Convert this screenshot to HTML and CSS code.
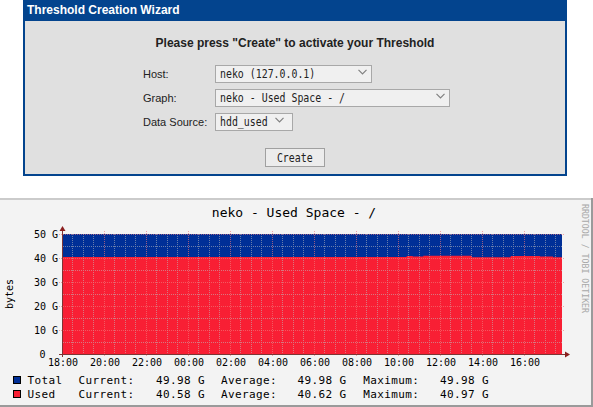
FILE: index.html
```html
<!DOCTYPE html>
<html>
<head>
<meta charset="utf-8">
<title>Threshold Creation Wizard</title>
<link rel="stylesheet" href="styles.css">
</head>
<body>
<div class="wizard">
  <div class="wiz-head">Threshold Creation Wizard</div>
  <div class="wiz-body">
    <h2 class="wiz-title">Please press "Create" to activate your Threshold</h2>
    <div class="form">
      <span class="lbl">Host:</span>
      <div class="sel sel-host"><span class="mono">neko (127.0.0.1)</span><svg class="chev" width="9" height="6" viewBox="0 0 9 6"><path d="M0.5 0.8 L4.5 4.8 L8.5 0.8" fill="none" stroke="#808080" stroke-width="1.2"/></svg></div>
      <span class="lbl">Graph:</span>
      <div class="sel sel-graph"><span class="mono">neko - Used Space - /</span><svg class="chev" width="9" height="6" viewBox="0 0 9 6"><path d="M0.5 0.8 L4.5 4.8 L8.5 0.8" fill="none" stroke="#808080" stroke-width="1.2"/></svg></div>
      <span class="lbl">Data Source:</span>
      <div class="sel sel-ds"><span class="mono">hdd_used</span><svg class="chev" width="9" height="6" viewBox="0 0 9 6"><path d="M0.5 0.8 L4.5 4.8 L8.5 0.8" fill="none" stroke="#808080" stroke-width="1.2"/></svg></div>
    </div>
    <button class="btn" type="button"><span class="mono mono-c">Create</span></button>
  </div>
</div>

<svg class="graph" width="593" height="209" viewBox="0 0 593 209">
  <rect x="0" y="0" width="593" height="209" fill="#f3f3f3"/>
  <rect x="0" y="0" width="593" height="2" fill="#cbcbcb"/>
  <rect x="591" y="0" width="2" height="209" fill="#9a9a9a"/>
  <rect x="0" y="207" width="593" height="2" fill="#9a9a9a"/>

  <text class="gt g-title" x="294" y="19" text-anchor="middle">neko - Used Space - /</text>
  <text class="gt g-mark" transform="translate(581.5,6) rotate(90)" textLength="109" lengthAdjust="spacingAndGlyphs">RRDTOOL / TOBI OETIKER</text>
  <text class="gt g-tick" transform="translate(12.5,96) rotate(-90)" text-anchor="middle">bytes</text>

  <!-- fills -->
  <rect x="63" y="36" width="499" height="120" fill="#002f97"/>
  <polygon fill="#f81f34" points="63,59 406.7,59 406.7,58 412.7,58 412.7,58.6 423.3,58.6 423.3,57.7 471.7,57.7 471.7,59.2 510.7,59.2 510.7,58 540,58 540,58.6 553,58.6 553,59.2 562,59.2 562,156 63,156"/>

  <!-- grid -->
  <path class="grid-minor" d="M72.5 36V156M83.5 36V156M93.5 36V156M114.5 36V156M125.5 36V156M135.5 36V156M156.5 36V156M167.5 36V156M177.5 36V156M198.5 36V156M209.5 36V156M219.5 36V156M240.5 36V156M251.5 36V156M261.5 36V156M282.5 36V156M293.5 36V156M303.5 36V156M324.5 36V156M335.5 36V156M345.5 36V156M366.5 36V156M377.5 36V156M387.5 36V156M408.5 36V156M419.5 36V156M429.5 36V156M450.5 36V156M461.5 36V156M471.5 36V156M492.5 36V156M503.5 36V156M513.5 36V156M534.5 36V156M545.5 36V156M555.5 36V156M63 48.5H562M63 72.5H562M63 96.5H562M63 120.5H562M63 144.5H562"/>
  <path class="grid-major" d="M104.5 33V159M146.5 33V159M188.5 33V159M230.5 33V159M272.5 33V159M314.5 33V159M356.5 33V159M398.5 33V159M440.5 33V159M482.5 33V159M524.5 33V159M59 36.5H565M59 60.5H565M59 84.5H565M59 108.5H565M59 132.5H565"/>

  <!-- axes -->
  <path d="M62.5 159V31M59 156.5H566" stroke="#7e3434" stroke-width="1" fill="none"/>
  <polygon points="59.5,33 62.5,28 65.5,33" fill="#8b1f1f"/>
  <polygon points="565,153.5 570,156.5 565,159.5" fill="#8b1f1f"/>

  <!-- y labels -->
  <text class="gt g-tick" x="58" y="40" text-anchor="end">50 G</text>
  <text class="gt g-tick" x="58" y="64" text-anchor="end">40 G</text>
  <text class="gt g-tick" x="58" y="88" text-anchor="end">30 G</text>
  <text class="gt g-tick" x="58" y="112" text-anchor="end">20 G</text>
  <text class="gt g-tick" x="58" y="136" text-anchor="end">10 G</text>
  <text class="gt g-tick" x="45.5" y="160" text-anchor="end">0</text>

  <!-- x labels -->
  <text class="gt g-tick" x="63" y="168" text-anchor="middle">18:00</text>
  <text class="gt g-tick" x="105" y="168" text-anchor="middle">20:00</text>
  <text class="gt g-tick" x="147" y="168" text-anchor="middle">22:00</text>
  <text class="gt g-tick" x="189" y="168" text-anchor="middle">00:00</text>
  <text class="gt g-tick" x="231" y="168" text-anchor="middle">02:00</text>
  <text class="gt g-tick" x="273" y="168" text-anchor="middle">04:00</text>
  <text class="gt g-tick" x="315" y="168" text-anchor="middle">06:00</text>
  <text class="gt g-tick" x="357" y="168" text-anchor="middle">08:00</text>
  <text class="gt g-tick" x="399" y="168" text-anchor="middle">10:00</text>
  <text class="gt g-tick" x="441" y="168" text-anchor="middle">12:00</text>
  <text class="gt g-tick" x="483" y="168" text-anchor="middle">14:00</text>
  <text class="gt g-tick" x="525" y="168" text-anchor="middle">16:00</text>

  <!-- legend -->
  <rect x="13.5" y="178.5" width="7" height="7" fill="#002f97" stroke="#000" stroke-width="1"/>
  <rect x="13.5" y="192.5" width="7" height="7" fill="#f81f34" stroke="#000" stroke-width="1"/>
  <text class="gt g-leg" x="27.6" y="186">Total</text>
  <text class="gt g-leg" x="78.6" y="186">Current:</text>
  <text class="gt g-leg" x="156" y="186">49.98 G</text>
  <text class="gt g-leg" x="221" y="186">Average:</text>
  <text class="gt g-leg" x="297.6" y="186">49.98 G</text>
  <text class="gt g-leg" x="363.3" y="186">Maximum:</text>
  <text class="gt g-leg" x="440" y="186">49.98 G</text>
  <text class="gt g-leg" x="27.6" y="200">Used</text>
  <text class="gt g-leg" x="78.6" y="200">Current:</text>
  <text class="gt g-leg" x="156" y="200">40.58 G</text>
  <text class="gt g-leg" x="221" y="200">Average:</text>
  <text class="gt g-leg" x="297.6" y="200">40.62 G</text>
  <text class="gt g-leg" x="363.3" y="200">Maximum:</text>
  <text class="gt g-leg" x="440" y="200">40.97 G</text>
</svg>
</body>
</html>
```

FILE: styles.css
```css
body {
  margin: 0;
  background: #ffffff;
  font-family: "Liberation Sans", Arial, sans-serif;
}

.wizard {
  margin-left: 23px;
  width: 544px;
  box-sizing: border-box;
  border: 2px solid #03448e;
  border-top: 0;
  background: #e0e0e0;
}

.wiz-head {
  background: #03448e;
  color: #ffffff;
  font-weight: bold;
  font-size: 12px;
  height: 21px;
  line-height: 21px;
  padding-left: 2px;
}

.wiz-body {
  padding: 15px 0 7px;
}

.wiz-title {
  margin: 0;
  font-size: 12px;
  line-height: 14px;
  font-weight: bold;
  text-align: center;
  color: #222222;
}

.form {
  display: grid;
  grid-template-columns: 72px auto;
  justify-content: start;
  align-items: center;
  row-gap: 6px;
  margin: 15px 0 0 118px;
}

.lbl {
  font-size: 11px;
  color: #222222;
}

.sel {
  box-sizing: border-box;
  height: 18px;
  border: 1px solid #a8a8a8;
  background: #f0f0f0;
  display: flex;
  align-items: center;
  padding: 0 4px 0 4px;
  overflow: hidden;
}

.sel-host { width: 157px; }
.sel-graph { width: 235px; }
.sel-ds { width: 78px; padding-right: 9px; }

.chev {
  margin-left: auto;
  align-self: flex-start;
  margin-top: 3px;
  flex: none;
}

.mono {
  display: inline-block;
  font-family: "DejaVu Sans Mono", monospace;
  font-size: 11.5px;
  line-height: 14px;
  color: #222222;
  white-space: pre;
  transform: scaleX(0.86);
  transform-origin: left center;
}

.mono-c {
  transform-origin: center center;
}

.btn {
  display: block;
  margin: 17px auto 0;
  width: 60px;
  height: 19px;
  box-sizing: border-box;
  border: 1px solid #a0a0a0;
  background: #ececec;
  padding: 0;
  line-height: 0;
}

.graph {
  display: block;
  margin-top: 22px;
}

.gt {
  font-family: "DejaVu Sans Mono", monospace;
  fill: #000000;
}

.g-title { font-size: 13px; }
.g-tick { font-size: 10px; }
.g-leg { font-size: 11px; letter-spacing: 0.38px; }
.g-mark { font-size: 9px; fill: #a8a8a8; }

.grid-minor {
  fill: none;
  stroke: rgba(190, 190, 190, 0.55);
  stroke-width: 1;
  stroke-dasharray: 1 1;
  shape-rendering: crispEdges;
}

.grid-major {
  fill: none;
  stroke: rgba(240, 120, 120, 0.65);
  stroke-width: 1;
  stroke-dasharray: 1 1;
  shape-rendering: crispEdges;
}
```
